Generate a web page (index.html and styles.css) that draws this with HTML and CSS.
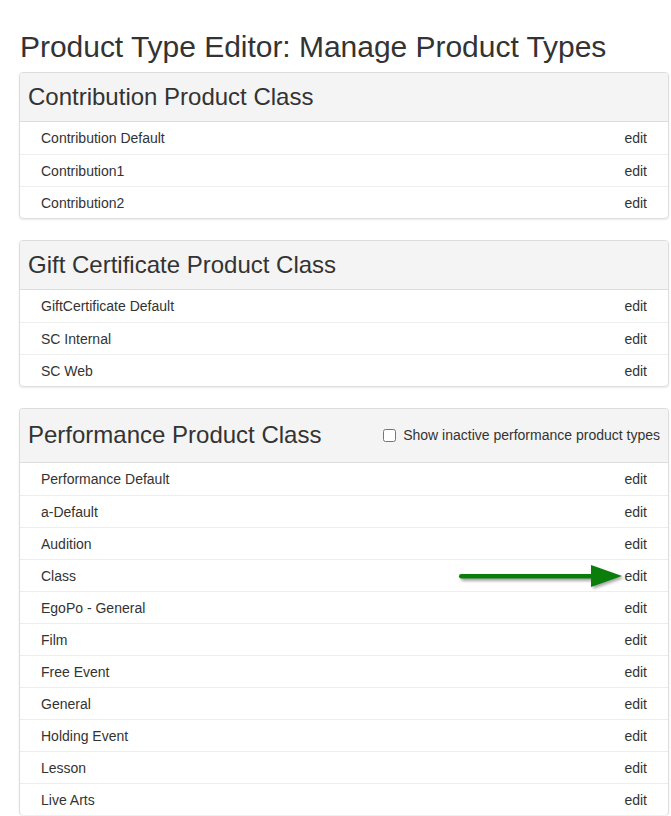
FILE: index.html
```html
<!DOCTYPE html>
<html lang="en">

<head>
    <meta charset="UTF-8">
    <meta name="viewport" content="width=device-width, initial-scale=1.0">
    <title>Product Type Editor</title>
    <link rel="stylesheet" href="styles.css">
</head>

<body>
    <div class="page">
        <h1>Product Type Editor: Manage Product Types</h1>

        <div class="panel">
            <div class="panel-heading">
                <h3>Contribution Product Class</h3>
            </div>
            <ul class="type-list">
                <li><span>Contribution Default</span><a href="#">edit</a></li>
                <li><span>Contribution1</span><a href="#">edit</a></li>
                <li><span>Contribution2</span><a href="#">edit</a></li>
            </ul>
        </div>

        <div class="panel">
            <div class="panel-heading">
                <h3>Gift Certificate Product Class</h3>
            </div>
            <ul class="type-list">
                <li><span>GiftCertificate Default</span><a href="#">edit</a></li>
                <li><span>SC Internal</span><a href="#">edit</a></li>
                <li><span>SC Web</span><a href="#">edit</a></li>
            </ul>
        </div>

        <div class="panel last">
            <div class="panel-heading tall">
                <h3>Performance Product Class</h3>
                <label class="toggle"><input type="checkbox"> Show inactive performance product types</label>
            </div>
            <ul class="type-list">
                <li><span>Performance Default</span><a href="#">edit</a></li>
                <li><span>a-Default</span><a href="#">edit</a></li>
                <li><span>Audition</span><a href="#">edit</a></li>
                <li class="marked">
                    <span>Class</span>
                    <svg class="arrow" width="180" height="36" viewBox="0 0 180 36">
                        <defs>
                            <filter id="blur" x="-10%" y="-50%" width="120%" height="200%">
                                <feGaussianBlur stdDeviation="1.6" />
                            </filter>
                        </defs>
                        <g fill="#000" opacity="0.35" filter="url(#blur)">
                            <rect x="4" y="17" width="140" height="5" rx="2.5" />
                            <polygon points="136,8 167,19 136,30" />
                        </g>
                        <g fill="#0b7d0b">
                            <rect x="2" y="15" width="140" height="4.5" rx="2.2" />
                            <polygon points="134,6 165,17 134,28" />
                        </g>
                    </svg>
                    <a href="#">edit</a>
                </li>
                <li><span>EgoPo - General</span><a href="#">edit</a></li>
                <li><span>Film</span><a href="#">edit</a></li>
                <li><span>Free Event</span><a href="#">edit</a></li>
                <li><span>General</span><a href="#">edit</a></li>
                <li><span>Holding Event</span><a href="#">edit</a></li>
                <li><span>Lesson</span><a href="#">edit</a></li>
                <li><span>Live Arts</span><a href="#">edit</a></li>
            </ul>
        </div>
    </div>
</body>

</html>
```

FILE: styles.css
```css
* {
    margin: 0;
    padding: 0;
    box-sizing: border-box;
}

body {
    font-family: "Liberation Sans", Arial, sans-serif;
    color: #333;
    background: white;
}

.page {
    padding: 0 2px 0 19px;
}

h1 {
    font-size: 30px;
    font-weight: 400;
    line-height: 36px;
    margin: 29px 0 7px 1px;
    color: #333;
    letter-spacing: -0.03px;
}

.panel {
    border: 1px solid #ddd;
    border-radius: 4px;
    box-shadow: 0 1px 2px rgba(0, 0, 0, 0.08);
    margin-bottom: 21px;
    background: white;
}

.panel.last {
    border-bottom: none;
}

.panel-heading {
    display: flex;
    align-items: center;
    justify-content: space-between;
    height: 49px;
    padding: 1px 8px 0;
    background: #f4f4f4;
    border-bottom: 1px solid #ddd;
    border-radius: 3px 3px 0 0;
}

.panel-heading.tall {
    height: 54px;
}

.panel-heading h3 {
    font-size: 24px;
    font-weight: 400;
    color: #333;
    padding-bottom: 2px;
}

.toggle {
    display: flex;
    align-items: center;
    gap: 7px;
    font-size: 14px;
    color: #333;
    padding-bottom: 2px;
}

.toggle input {
    width: 13px;
    height: 13px;
    margin: 0 0 0 1px;
}

.type-list {
    list-style: none;
}

.type-list li {
    position: relative;
    display: flex;
    justify-content: space-between;
    align-items: center;
    height: 32px;
    padding: 0 21px;
    font-size: 14px;
    border-top: 1px solid #eee;
}

.type-list li:first-child {
    border-top: none;
}

.type-list a {
    color: #333;
    text-decoration: none;
}

.arrow {
    position: absolute;
    right: 31px;
    top: -1px;
}
```
